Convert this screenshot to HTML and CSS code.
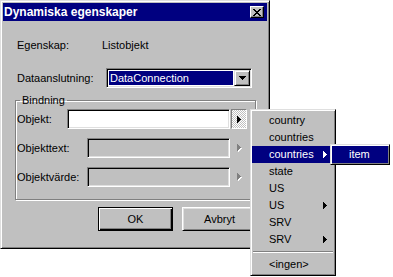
FILE: index.html
```html
<!DOCTYPE html>
<html lang="sv">
<head>
    <meta charset="UTF-8" />
    <title>Dynamiska egenskaper</title>
    <link rel="stylesheet" href="styles.css">
</head>
<body>
    <div class="dialog">
        <div class="titlebar">
            <span class="title">Dynamiska egenskaper</span>
            <span class="close">
                <svg width="8" height="7" viewBox="0 0 8 7"><path d="M0 0h2v1H0zM6 0h2v1H6zM1 1h2v1H1zM5 1h2v1H5zM2 2h4v1H2zM3 3h2v1H3zM2 4h4v1H2zM1 5h2v1H1zM5 5h2v1H5zM0 6h2v1H0zM6 6h2v1H6z" fill="#000"/></svg>
            </span>
        </div>

        <div class="content">
            <div class="row row-prop">
                <span class="label">Egenskap:</span>
                <span>Listobjekt</span>
            </div>

            <div class="row row-source">
                <span class="label">Dataanslutning:</span>
                <div class="select">
                    <span class="select-value">DataConnection</span>
                    <span class="select-btn">
                        <svg width="7" height="4" viewBox="0 0 7 4"><path d="M0 0h7v1H0zM1 1h5v1H1zM2 2h3v1H2zM3 3h1v1H3z" fill="#000"/></svg>
                    </span>
                </div>
            </div>

            <fieldset class="group">
                <legend>Bindning</legend>
                <div class="field">
                    <span class="label">Objekt:</span>
                    <div class="input"></div>
                    <span class="pick pressed">
                        <svg width="4" height="7" viewBox="0 0 4 7"><path d="M0 0h1v7H0zM1 1h1v5H1zM2 2h1v3H2zM3 3h1v1H3z" fill="#000"/></svg>
                    </span>
                </div>
                <div class="field">
                    <span class="label label-wide">Objekttext:</span>
                    <div class="input disabled"></div>
                    <span class="pick">
                        <svg width="5" height="8" viewBox="0 0 5 8"><path d="M1 1h1v7H1zM2 2h1v5H2zM3 3h1v3H3zM4 4h1v1H4z" fill="#fff"/><path d="M0 0h1v7H0zM1 1h1v5H1zM2 2h1v3H2zM3 3h1v1H3z" fill="#808080"/></svg>
                    </span>
                </div>
                <div class="field">
                    <span class="label label-wide">Objektvärde:</span>
                    <div class="input disabled"></div>
                    <span class="pick">
                        <svg width="5" height="8" viewBox="0 0 5 8"><path d="M1 1h1v7H1zM2 2h1v5H2zM3 3h1v3H3zM4 4h1v1H4z" fill="#fff"/><path d="M0 0h1v7H0zM1 1h1v5H1zM2 2h1v3H2zM3 3h1v1H3z" fill="#808080"/></svg>
                    </span>
                </div>
            </fieldset>

            <div class="buttons">
                <button class="btn default">OK</button>
                <button class="btn">Avbryt</button>
            </div>
        </div>
    </div>

    <div class="menu">
        <div class="item"><span class="item-label">country</span></div>
        <div class="item"><span class="item-label">countries</span></div>
        <div class="item active">
            <span class="item-label">countries</span>
            <svg width="4" height="7" viewBox="0 0 4 7"><path d="M0 0h1v7H0zM1 1h1v5H1zM2 2h1v3H2zM3 3h1v1H3z" fill="#fff"/></svg>
            <div class="submenu">
                <div class="item active"><span class="item-label">item</span></div>
            </div>
        </div>
        <div class="item"><span class="item-label">state</span></div>
        <div class="item"><span class="item-label">US</span></div>
        <div class="item">
            <span class="item-label">US</span>
            <svg width="4" height="7" viewBox="0 0 4 7"><path d="M0 0h1v7H0zM1 1h1v5H1zM2 2h1v3H2zM3 3h1v1H3z" fill="#000"/></svg>
        </div>
        <div class="item"><span class="item-label">SRV</span></div>
        <div class="item">
            <span class="item-label">SRV</span>
            <svg width="4" height="7" viewBox="0 0 4 7"><path d="M0 0h1v7H0zM1 1h1v5H1zM2 2h1v3H2zM3 3h1v1H3z" fill="#000"/></svg>
        </div>
        <div class="sep"></div>
        <div class="item"><span class="item-label">&lt;ingen&gt;</span></div>
    </div>
</body>
</html>
```

FILE: styles.css
```css
body {
    margin: 0;
    background: #fff;
    color: #000;
    font-family: "Liberation Sans", Arial, sans-serif;
    font-size: 11px;
    line-height: 13px;
    position: relative;
    height: 277px;
    overflow: hidden;
}

svg {
    display: block;
}

.dialog {
    width: 270px;
    height: 249px;
    box-sizing: border-box;
    background: #c0c0c0;
    border: 1px solid;
    border-color: #dfdfdf #000 #000 #dfdfdf;
    box-shadow: inset 1px 1px #fff, inset -1px -1px #808080;
    padding: 2px;
}

.titlebar {
    height: 18px;
    background: #000080;
    color: #fff;
    display: flex;
    align-items: center;
    justify-content: space-between;
    padding: 0 3px 0 1px;
}

.title {
    font-weight: bold;
    font-size: 12px;
}

.close {
    width: 14px;
    height: 12px;
    box-sizing: border-box;
    background: #c0c0c0;
    border: 1px solid;
    border-color: #fff #000 #000 #fff;
    box-shadow: inset -1px -1px #808080;
    display: flex;
    align-items: center;
    justify-content: center;
}

.content {
    padding: 16px 10px 0 12px;
}

.row {
    display: flex;
    align-items: center;
    padding-left: 2px;
}

.row-prop {
    height: 16px;
}

.row-prop .label {
    width: 85px;
}

.row-source {
    height: 20px;
    margin-top: 15px;
}

.row-source .label {
    width: 89px;
}

.select {
    width: 146px;
    height: 20px;
    box-sizing: border-box;
    border: 1px solid;
    border-color: #808080 #fff #fff #808080;
    box-shadow: inset 1px 1px #000, inset -1px -1px #dfdfdf;
    padding: 1px;
    background: #fff;
    display: flex;
}

.select-value {
    flex: 1;
    margin: 1px;
    padding-left: 1px;
    background: #000080;
    color: #fff;
    display: flex;
    align-items: center;
}

.select-btn {
    width: 16px;
    box-sizing: border-box;
    background: #c0c0c0;
    border: 1px solid;
    border-color: #dfdfdf #000 #000 #dfdfdf;
    box-shadow: inset 1px 1px #fff, inset -1px -1px #808080;
    display: flex;
    align-items: center;
    justify-content: center;
}

.group {
    margin: 6px 1px 0 0;
    padding: 2px 8px 12px 1px;
    min-width: 0;
    border: 1px solid #808080;
    box-shadow: 1px 1px 0 #fff, inset 1px 1px 0 #fff;
}

.group legend {
    margin-left: 3px;
    padding: 0 2px;
    line-height: 13px;
}

.field {
    display: flex;
    align-items: center;
    height: 20px;
}

.field + .field {
    margin-top: 9px;
}

.field .label {
    width: 50px;
}

.field .label-wide {
    width: 70px;
}

.input {
    flex: 1;
    height: 20px;
    box-sizing: border-box;
    border: 1px solid;
    border-color: #808080 #fff #fff #808080;
    box-shadow: inset 1px 1px #000, inset -1px -1px #dfdfdf;
    background: #fff;
}

.input.disabled {
    background: #c0c0c0;
}

.pick {
    width: 16px;
    height: 20px;
    margin-left: 1px;
    box-sizing: border-box;
    display: flex;
    align-items: center;
    justify-content: center;
}

.pick.pressed {
    border: 1px solid;
    border-color: #808080 #fff #fff #808080;
    background-image: conic-gradient(#fff 25%, #c0c0c0 0 50%, #fff 0 75%, #c0c0c0 0);
    background-size: 2px 2px;
}

.buttons {
    display: flex;
    justify-content: flex-end;
    gap: 9px;
    margin-top: 7px;
}

.btn {
    width: 75px;
    height: 24px;
    box-sizing: border-box;
    font: inherit;
    color: #000;
    background: #c0c0c0;
    border: 1px solid;
    border-color: #fff #000 #000 #fff;
    box-shadow: inset 1px 1px #dfdfdf, inset -1px -1px #808080;
    padding: 0;
}

.btn.default {
    border-color: #000;
    box-shadow: inset 1px 1px #fff, inset -1px -1px #000, inset -2px -2px #808080;
}

.menu {
    position: absolute;
    left: 250px;
    top: 109px;
    width: 86px;
    box-sizing: border-box;
    background: #c0c0c0;
    border: 1px solid;
    border-color: #dfdfdf #000 #000 #dfdfdf;
    box-shadow: inset 1px 1px #fff, inset -1px -1px #808080;
    padding: 2px 1px;
}

.item {
    height: 17px;
    display: flex;
    align-items: center;
    padding: 0 7px 0 17px;
    position: relative;
}

.item-label {
    flex: 1;
}

.item.active {
    background: #000080;
    color: #fff;
}

.sep {
    height: 8px;
    display: flex;
    align-items: center;
    padding: 0 1px;
}

.sep::before {
    content: "";
    flex: 1;
    border-top: 1px solid #808080;
    border-bottom: 1px solid #fff;
}

.submenu {
    position: absolute;
    left: 78px;
    top: -2px;
    width: 60px;
    box-sizing: border-box;
    background: #c0c0c0;
    color: #000;
    border: 1px solid;
    border-color: #dfdfdf #000 #000 #dfdfdf;
    box-shadow: inset 1px 1px #fff, inset -1px -1px #808080;
    padding: 1px;
}

.submenu .item {
    padding-left: 17px;
}
```
